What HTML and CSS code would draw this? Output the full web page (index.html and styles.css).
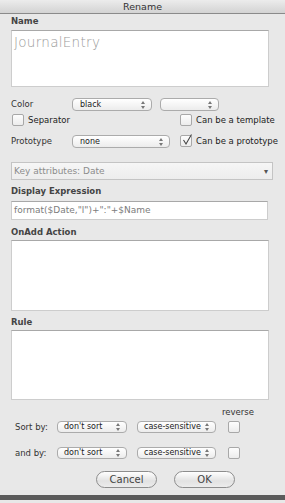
FILE: index.html
```html
<!DOCTYPE html>
<html lang="en">
<head>
    <meta charset="UTF-8">
    <title>Rename</title>
    <link rel="stylesheet" href="styles.css">
</head>
<body>
    <div class="titlebar">Rename</div>

    <div class="form">
        <div class="label bold first">Name</div>
        <div class="field name-field">JournalEntry</div>

        <!-- color / flags -->
        <div class="row color-row">
            <span class="row-label">Color</span>
            <span class="popup color-main">black</span>
            <span class="popup color-extra"></span>
        </div>
        <div class="row check-row">
            <label class="check-group left-group"><span class="check"></span>Separator</label>
            <label class="check-group"><span class="check"></span>Can be a template</label>
        </div>
        <div class="row proto-row">
            <span class="row-label">Prototype</span>
            <span class="popup proto">none</span>
            <label class="check-group"><span class="check checked"><svg viewBox="0 0 12 12" width="12" height="12"><path d="M2.5 6 L5 10 L10.5 0.5" fill="none" stroke="#444" stroke-width="1.1"/></svg></span>Can be a prototype</label>
        </div>

        <div class="combo">Key attributes: Date<span class="combo-arrow">&#9662;</span></div>

        <div class="label bold">Display Expression</div>
        <div class="field line">format($Date,"l")+":"+$Name</div>

        <div class="label bold">OnAdd Action</div>
        <div class="field area onadd"></div>

        <div class="label bold">Rule</div>
        <div class="field area rule"></div>

        <!-- sorting -->
        <div class="reverse">reverse</div>
        <div class="row sort-row">
            <span class="sort-label">Sort by:</span>
            <span class="popup sort">don't sort</span>
            <span class="popup case">case-sensitive</span>
            <span class="check"></span>
        </div>
        <div class="row sort-row second">
            <span class="sort-label">and by:</span>
            <span class="popup sort">don't sort</span>
            <span class="popup case">case-sensitive</span>
            <span class="check"></span>
        </div>

        <div class="buttons">
            <button class="btn">Cancel</button>
            <button class="btn">OK</button>
        </div>
    </div>
    <div class="bottom-edge"></div>
</body>
</html>
```

FILE: styles.css
```css
body {
    margin: 0;
    width: 285px;
    height: 503px;
    overflow: hidden;
    background: #e8e8e8;
    font-family: "DejaVu Sans", "Liberation Sans", sans-serif;
    font-size: 8.5px;
    color: #2a2a2a;
}

.titlebar {
    height: 13px;
    line-height: 13px;
    text-align: center;
    font-size: 9.5px;
    color: #333;
    background: linear-gradient(#ececec, #d3d3d3);
    border-bottom: 1px solid #8a8a8a;
}

.form {
    padding: 0 11px;
}

.label {
    height: 11px;
    line-height: 11px;
    font-size: 8.5px;
}

.bold {
    font-weight: bold;
    color: #444;
}

.first { margin-top: 2px; }

.field {
    box-sizing: border-box;
    background: #fff;
    border: 1px solid #cdcdcd;
    border-top-color: #a8a8a8;
    color: #8a8a8a;
}

.name-field {
    margin-top: 3px;
    width: 258px;
    height: 57px;
    padding: 3px 2px;
    font-size: 13.5px;
    font-weight: 300;
    letter-spacing: 0.3px;
    color: #9a9a9a;
}

.row {
    display: flex;
    align-items: center;
    white-space: nowrap;
}

.row > * { flex: none; }

.row-label {
    width: 61px;
    color: #333;
}

.popup {
    box-sizing: border-box;
    position: relative;
    height: 13px;
    line-height: 11px;
    padding-left: 7px;
    border: 1px solid #ababab;
    border-radius: 4px;
    background: linear-gradient(#ffffff, #ececec);
    color: #222;
    font-size: 8px;
    overflow: hidden;
}

/* stacked up/down arrows */
.popup::before,
.popup::after {
    content: "";
    position: absolute;
    right: 6px;
    border-left: 2px solid transparent;
    border-right: 2px solid transparent;
}

.popup::before {
    top: 2px;
    border-bottom: 3px solid #777;
}

.popup::after {
    top: 7px;
    border-top: 3px solid #777;
}

.color-row {
    margin-top: 10px;
    height: 14px;
}

.color-main { width: 80px; }
.color-extra { width: 59px; margin-left: 8px; }

.check {
    box-sizing: border-box;
    display: inline-block;
    width: 12px;
    height: 12px;
    border: 1px solid #a8a8a8;
    border-radius: 2px;
    background: linear-gradient(#fdfdfd, #ececec);
    flex: none;
}

.check svg {
    display: block;
    margin: -2px 0 0 0;
}

.check-group {
    display: flex;
    align-items: center;
    gap: 4px;
    font-size: 8.5px;
    color: #222;
}

.check-row {
    margin-top: 3px;
    height: 12px;
    padding-left: 1px;
}

.left-group { width: 168px; }

.proto-row {
    margin-top: 8px;
    height: 14px;
}

.proto { width: 98px; margin-right: 10px; }

.combo {
    box-sizing: border-box;
    margin-top: 14px;
    width: 262px;
    height: 18px;
    line-height: 16px;
    padding-left: 2px;
    border: 1px solid #c4c4c4;
    background: linear-gradient(#f6f6f6, #ededed);
    color: #8c8c8c;
    font-size: 9px;
    display: flex;
    justify-content: space-between;
}

.combo-arrow {
    color: #555;
    font-size: 8px;
    padding-right: 4px;
    padding-top: 1px;
}

.label + .field.line { margin-top: 4px; }

.combo + .label { margin-top: 6px; }

.line {
    width: 257px;
    height: 19px;
    line-height: 17px;
    padding-left: 2px;
    font-size: 9px;
    color: #7c7c7c;
}

.line + .label { margin-top: 7px; }

.area {
    margin-top: 2px;
    width: 258px;
}

.onadd { height: 71px; }
.area + .label { margin-top: 6px; }
.rule { height: 70px; }

.reverse {
    margin: 7px 0 0 211px;
    height: 11px;
    line-height: 11px;
    font-size: 8.5px;
    color: #333;
}

.sort-row {
    margin-top: 2px;
    height: 13px;
    padding-left: 4px;
}

.sort-row.second { margin-top: 13px; }

.sort-label {
    width: 42px;
    color: #333;
}

.sort-row .popup { height: 12px; line-height: 10px; padding-left: 6px; }
.sort-row .popup::before { top: 1px; }
.sort-row .popup::after { top: 6px; }
.sort { width: 70px; }
.case { width: 79px; margin-left: 10px; }
.sort-row .check { margin-left: 12px; }

.buttons {
    margin-top: 12px;
    display: flex;
    gap: 17px;
    padding-left: 85px;
}

.btn {
    box-sizing: border-box;
    width: 61px;
    height: 17px;
    padding: 0;
    border: 1px solid #8d8d8d;
    border-radius: 9px;
    background: linear-gradient(#ffffff, #e2e2e2 60%, #ececec);
    font-family: "DejaVu Sans", "Liberation Sans", sans-serif;
    font-size: 10px;
    color: #444;
}

.bottom-edge {
    margin-top: 7px;
    height: 5px;
    background: #5b5b5b;
}
```
